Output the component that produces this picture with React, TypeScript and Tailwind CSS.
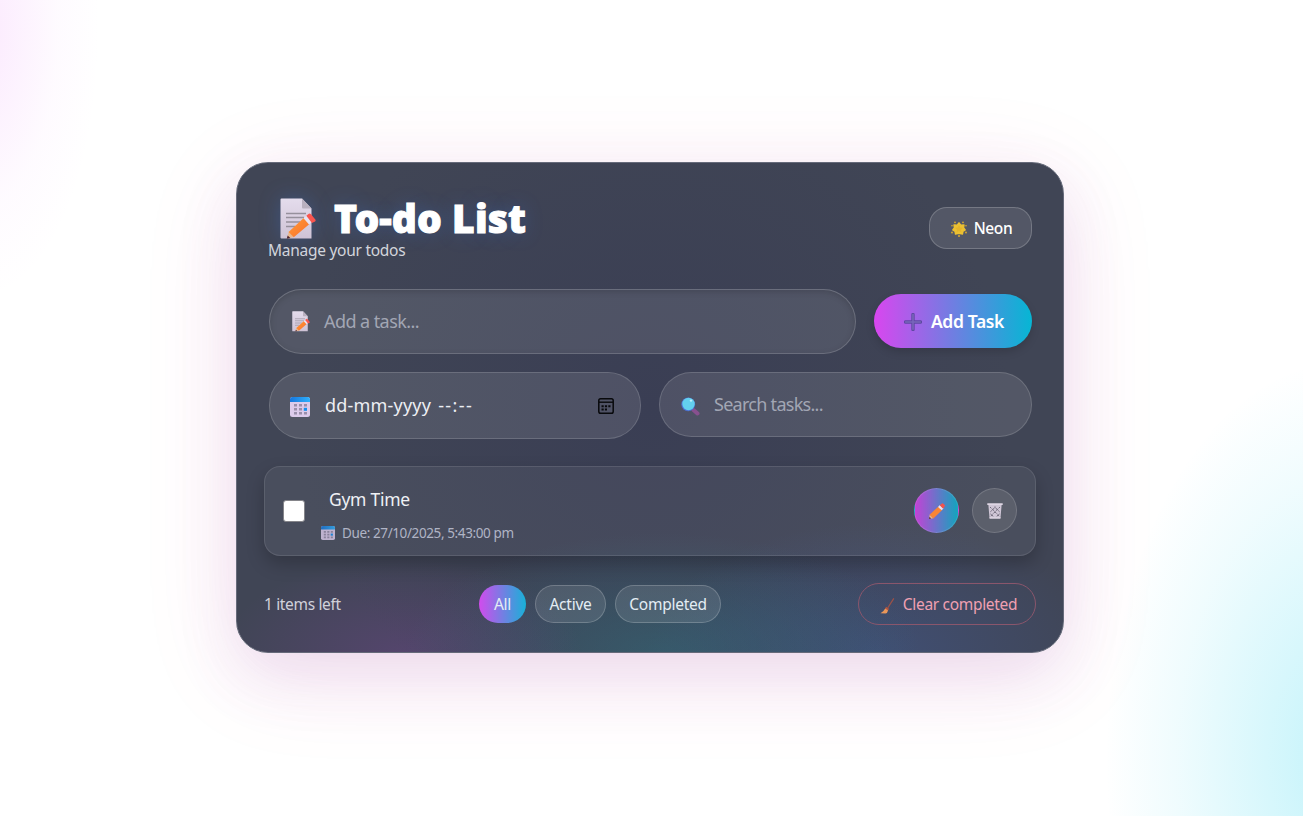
import React from "react";

const Memo = ({ className }: { className: string }) => (
  <svg viewBox="0 0 36 42" className={className}>
    <defs>
      <linearGradient id="paper" x1="0" y1="0" x2="0" y2="1">
        <stop offset="0" stopColor="#e4dcec" />
        <stop offset="1" stopColor="#cfc3d6" />
      </linearGradient>
      <linearGradient id="pen" x1="0" y1="0" x2="1" y2="1">
        <stop offset="0" stopColor="#ff9a34" />
        <stop offset="1" stopColor="#f9702f" />
      </linearGradient>
    </defs>
    <path d="M1.500 .5H22L31.500 10.500V40.500H1.500a1 1 0 0 1-1-1V1.500a1 1 0 0 1 1-1z" fill="url(#paper)" />
    <path d="M22 .5L31.500 10.500H23a1 1 0 0 1-1-1z" fill="#b9b0bf" />
    <path d="M6 15.500H26M6 19.500H24M6 24H20M6 28.500H15" stroke="#96909c" strokeWidth="1.300" />
    <path d="M7 40.500L8.800 33.500 14 39z" fill="#e8b78e" />
    <path d="M6.800 40.800l.9-3.200 2.600 2.300z" fill="#4a2330" />
    <path d="M8.600 34L24 19.800L29.500 26L13.800 39.300z" fill="url(#pen)" />
    <path d="M23.500 20.300L26.800 17.400L32.200 23.700L29 26.500z" fill="#e9e3f2" />
    <path d="M26.300 17.800L28.800 15.800q1-.7 2 .2L35.300 21.400q.8 1.200-.2 2L31.900 25z" fill="#f9564f" />
  </svg>
);

const CalendarIcon = ({ className }: { className: string }) => (
  <svg viewBox="0 0 20 20" className={className}>
    <defs>
      <linearGradient id="caltop" x1="0" y1="0" x2="1" y2="0">
        <stop offset="0" stopColor="#1676dc" />
        <stop offset="1" stopColor="#2fb0fb" />
      </linearGradient>
    </defs>
    <rect width="20" height="20" rx="2.500" fill="#dccbeb" />
    <path d="M0 5V2.500A2.500 2.500 0 0 1 2.500 0h15A2.500 2.500 0 0 1 20 2.500V5z" fill="url(#caltop)" />
    <path d="M4 7h3v2.600H4zM9 7h3v2.600H9zM14 7h3v2.600h-3zM4 11h3v2.600H4zM9 11h3v2.600H9zM4 15h3v2.500H4zM9 15h3v2.500H9zM14 15h3v2.500h-3z" fill="#9a8fab" />
    <path d="M13.800 10.800h3.200v3h-3.200z" fill="#168fee" />
  </svg>
);

const Star = () => (
  <svg viewBox="0 0 16 16" className="h-4 w-4 shrink-0">
    <path d="M8 1.800L9.800 4.200 13 4 12.500 6.800 14.200 9 11.900 10.300 11.500 13 8 12.300 4.500 13 4.100 10.300 1.800 9 3.500 6.800 3 4 6.200 4.200z" fill="#ecc132" stroke="#ecc132" strokeWidth="1.400" strokeLinejoin="round" />
    <path d="M8 4l1.300 2.500 2.700.3-2 1.900.5 2.700L8 10.100l-2.500 1.300.5-2.700-2-1.900 2.700-.3z" fill="#e5b52b" />
    <g fill="#dcab2a">
      <circle cx="4" cy="1.300" r=".9" /><circle cx="12" cy="1.300" r=".9" />
      <circle cx="1" cy="4.800" r=".8" /><circle cx="15" cy="4.800" r=".8" />
      <circle cx="1" cy="11.500" r=".9" /><circle cx="15" cy="11.500" r=".9" />
      <circle cx="8" cy="15" r="1" />
    </g>
  </svg>
);

const Plus = () => (
  <svg viewBox="0 0 18 18" className="mt-px h-[18px] w-[18px] shrink-0">
    <path d="M9 1.500V16.500M1.500 9H16.500" stroke="#5e49a3" strokeWidth="3.400" strokeLinecap="round" />
    <path d="M9 1.600V16.300M1.600 9H16.300" stroke="#7866ba" strokeWidth="1.600" strokeLinecap="round" fill="none" />
  </svg>
);

const Magnifier = () => (
  <svg viewBox="0 0 20 20" className="h-5 w-5 shrink-0">
    <path d="M12.500 14l4 3.500" stroke="#88508f" strokeWidth="4" strokeLinecap="round" />
    <circle cx="7.200" cy="8.300" r="6.900" fill="#4d6fd0" />
    <circle cx="7.500" cy="8" r="6.200" fill="#63d0ee" />
    <circle cx="10" cy="4.600" r="1.200" fill="#b9effb" />
  </svg>
);

const Pencil = () => (
  <svg viewBox="0 0 16 16" className="h-4 w-4">
    <path d="M0 16L.7 11.600 4.400 15.300z" fill="#e8b48b" />
    <path d="M0 16l.4-2.200 1.800 1.800z" fill="#562c39" />
    <path d="M.6 11.700L9.500 3.400 13.200 6.900 4.300 15.500z" fill="#f98535" />
    <path d="M9 3.900L10.900 2 14.500 5.500 12.700 7.300z" fill="#e6dff2" />
    <path d="M10.700 2.300L13 .4q.6-.4 1.100.1l1.600 1.600q.5.700 0 1.200l-1.600 2.400z" fill="#f2544e" />
  </svg>
);

const Basket = () => (
  <svg viewBox="0 0 16 16" className="h-4 w-4">
    <path d="M1.400 2H14.600L13.500 15H2.500z" fill="#cfc6d6" />
    <path d="M3.200 4.200l9.600 9.300M12.800 4.200l-9.600 9.300M7.500 4l5.300 5M8.500 4L3.200 9M3.500 11l3 2.500M12.500 11L9.500 13.500" stroke="#5b5666" strokeWidth="1" strokeDasharray="1.300 .9" />
    <path d="M.3 1.200H15.700M2.500 15H13.500" stroke="#ded6e4" strokeWidth="1.700" />
  </svg>
);

const Broom = () => (
  <svg viewBox="0 0 15 16" className="mt-px h-4 w-[15px] shrink-0">
    <path d="M13.500 .8L8 9.500" stroke="#9b5148" strokeWidth="1.300" strokeLinecap="round" />
    <path d="M6 8.800L9 10.800 7.600 13.200 5 11z" fill="#b4553f" />
    <path d="M5.200 10.500L8 12.600Q7.500 15.300 5.500 15.500L.5 15.300Q3.800 13.500 5.200 10.500z" fill="#ea9759" />
  </svg>
);

const Picker = () => (
  <svg viewBox="0 0 16 16" className="h-4 w-4" fill="none" stroke="#08090c">
    <rect x=".8" y=".8" width="14.400" height="14.400" rx="1.800" strokeWidth="1.500" />
    <path d="M1 4.200H15" strokeWidth="1.400" />
    <path d="M3.500 8.300h9M3.500 11.600h5.500" strokeWidth="2" strokeDasharray="2.200 1.200" />
  </svg>
);

const field = "flex items-center rounded-[33px] border border-white/15 bg-white/10 text-[18px]";

export default function App() {
  return (
    <main className="flex h-[816px] w-full justify-center overflow-hidden bg-[radial-gradient(ellipse_120px_270px_at_-20px_30px,rgba(232,121,249,0.17),rgba(232,121,249,0.03)_65%,transparent),radial-gradient(ellipse_240px_400px_at_1345px_760px,rgba(34,211,238,0.28),rgba(34,211,238,0.07)_70%,transparent)] bg-white pt-[162px] pr-[3px] font-['Noto_Sans',sans-serif] text-white">
      <section className="h-[491px] w-[828px] rounded-[32px] border border-[#666a7a] bg-[radial-gradient(ellipse_180px_95px_at_165px_490px,rgba(120,70,150,0.36),transparent),radial-gradient(ellipse_260px_120px_at_425px_490px,rgba(45,120,135,0.42),transparent),radial-gradient(ellipse_230px_130px_at_640px_490px,rgba(65,95,165,0.38),transparent),radial-gradient(ellipse_360px_340px_at_415px_245px,#3a3e54,#404555)] px-[27px] shadow-[0_24px_60px_rgba(139,92,190,0.13),0_20px_100px_rgba(219,39,119,0.11)]">
        <header className="flex h-[126px] justify-between pr-[4px] pl-[5px]">
          <div className="pt-[34px]">
            <h1 className="flex h-[42px] items-center pl-[11px] text-[39px] leading-[38px] font-black tracking-[0.080px] whitespace-nowrap [-webkit-text-stroke:1px_white] [text-shadow:0_0_20px_rgba(59,130,246,0.3)]">
              <Memo className="mt-px mr-[18px] h-[42px] w-[36px] shrink-0 drop-shadow-[0_0_10px_rgba(59,130,246,0.25)]" />
              To-do List
            </h1>
            <p className="-ml-px h-[22px] pt-px text-[15.500px] leading-[20px] tracking-[-0.270px] text-[#d3d5dc]">Manage your todos</p>
          </div>
          <button className="mt-[44px] flex h-[42px] w-[103px] items-center justify-center gap-[7px] rounded-[18px] border border-white/20 bg-white/10 pt-px pl-[2px] text-[15.500px] font-medium tracking-[-0.400px]"><Star />Neon</button>
        </header>
        <div className="flex items-start gap-[18px] pl-[5px]">
          <div className={`${field} h-[65px] w-[587px] shrink-0 pl-[22px] shadow-[inset_0_2px_6px_rgba(0,0,0,0.15)]`}>
            <Memo className="mr-[14px] h-[21px] w-[18px]" />
            <span className="tracking-[-0.570px] text-[#a2a6b4]">Add a task...</span>
          </div>
          <button className="mt-[5px] flex h-[54px] w-[158px] items-center justify-center gap-[9px] rounded-[27px] bg-[linear-gradient(90deg,#d946ef,#06b6d4)] pl-[2px] text-[17.500px] font-semibold tracking-[-0.350px] shadow-[0_4px_8px_rgba(0,0,0,0.15)]"><Plus />Add Task</button>
        </div>
        <div className="mt-[18px] flex items-start gap-[18px] pl-[5px]">
          <div className={`${field} h-[67px] w-[372px] shrink-0 pr-[26px] pl-5`}>
            <CalendarIcon className="mt-[2px] mr-[15px] h-5 w-5" />
            <span className="flex gap-[7px] text-[#eceef3]"><span className="tracking-[0.200px]">dd-mm-yyyy</span><span className="tracking-[1.400px]">--:--</span></span>
            <span className="ml-auto"><Picker /></span>
          </div>
          <div className={`${field} h-[65px] w-[373px] shrink-0 pl-[21px]`}>
            <span className="mt-[3px]"><Magnifier /></span>
            <span className="ml-[13px] tracking-[-0.720px] text-[#a2a6b4]">Search tasks...</span>
          </div>
        </div>
        <article className="mt-[27px] flex h-[90px] items-center rounded-[16px] border border-white/10 bg-white/5 px-[18px] shadow-[0_8px_18px_rgba(0,0,0,0.22)]">
          <span className="h-[22px] w-[22px] rounded-[3px] border-[1.500px] border-[#85858a] bg-white" />
          <div className="ml-[16px] pt-[8px]">
            <h2 className="ml-[8px] h-[36px] text-[17.500px] leading-[26px] tracking-[-0.270px] text-[#eff1f5]">Gym Time</h2>
            <p className="flex h-[22px] items-center text-[13.500px] tracking-[-0.390px] text-[#b0b4c5]"><CalendarIcon className="mr-[7px] h-[14px] w-[14px] opacity-80" />Due: 27/10/2025, 5:43:00 pm</p>
          </div>
          <div className="mb-px ml-auto flex gap-[13px]">
            <button className="flex h-[45px] w-[45px] items-center justify-center rounded-full border border-white/10 bg-[linear-gradient(90deg,#c342d6,#12a5bd)]"><Pencil /></button>
            <button className="flex h-[45px] w-[45px] items-center justify-center rounded-full border border-white/15 bg-[#5b5f6b]"><Basket /></button>
          </div>
        </article>
        <footer className="mt-[27px] flex h-[42px] items-center text-[15.500px] tracking-[-0.250px]">
          <span className="w-[215px] pt-[2px] tracking-[-0.350px] text-[#d0d1da]">1 items left</span>
          <div className="flex gap-[9px] text-[#e4edf4]">
            <button className="h-[38px] w-[47px] rounded-[19px] bg-[linear-gradient(90deg,#d24bed,#18b1d8)] pt-[2px]">All</button>
            <button className="h-[38px] w-[71px] rounded-[19px] border border-white/20 bg-white/10 pt-[2px]">Active</button>
            <button className="h-[38px] w-[106px] rounded-[19px] border border-white/20 bg-white/10 pt-[2px]">Completed</button>
          </div>
          <button className="ml-auto flex h-[42px] w-[178px] items-center justify-center gap-[8px] rounded-[21px] border border-[#8a566c] pt-[2px] pl-[3px] tracking-[-0.320px] text-[#f0a0b2]"><Broom />Clear completed</button>
        </footer>
      </section>
    </main>
  );
}
